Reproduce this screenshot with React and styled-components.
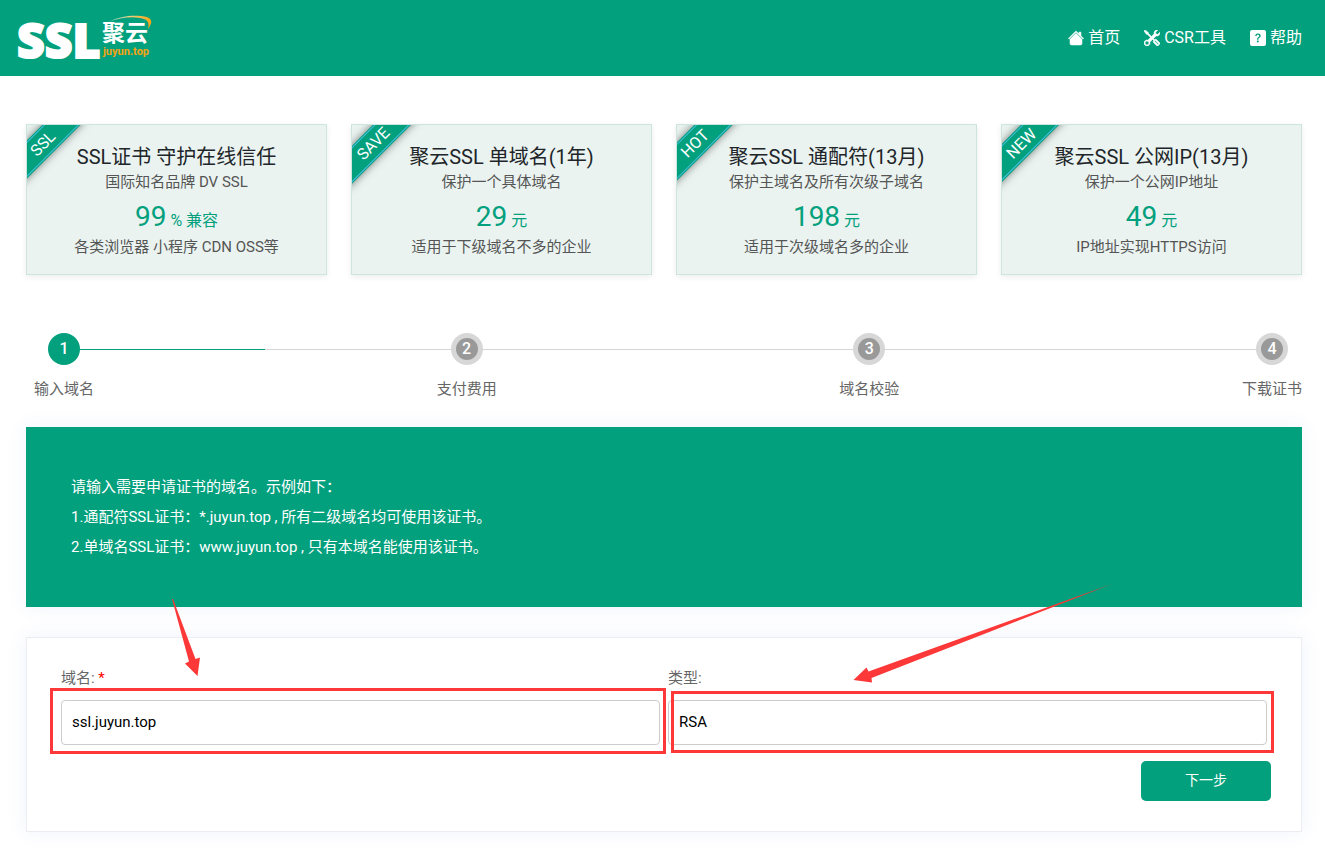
import React, { useState } from 'react';
import styled, { createGlobalStyle } from 'styled-components';
import { BsHouseFill, BsTools, BsQuestionSquareFill } from 'react-icons/bs';

const GREEN = '#03a07d';
const RED = '#fc3838';

const plans = [
  {
    ribbon: 'SSL',
    title: 'SSL证书 守护在线信任',
    subtitle: '国际知名品牌 DV SSL',
    price: '99',
    unit: '% 兼容',
    note: '各类浏览器 小程序 CDN OSS等',
  },
  {
    ribbon: 'SAVE',
    title: '聚云SSL 单域名(1年)',
    subtitle: '保护一个具体域名',
    price: '29',
    unit: '元',
    note: '适用于下级域名不多的企业',
  },
  {
    ribbon: 'HOT',
    title: '聚云SSL 通配符(13月)',
    subtitle: '保护主域名及所有次级子域名',
    price: '198',
    unit: '元',
    note: '适用于次级域名多的企业',
  },
  {
    ribbon: 'NEW',
    title: '聚云SSL 公网IP(13月)',
    subtitle: '保护一个公网IP地址',
    price: '49',
    unit: '元',
    note: 'IP地址实现HTTPS访问',
  },
];

const steps = ['输入域名', '支付费用', '域名校验', '下载证书'];

const Logo = () => (
  <LogoSvg width="140" height="52" viewBox="0 0 140 52" role="img" aria-label="SSL 聚云 juyun.top">
    <defs>
      <linearGradient id="swoosh" x1="0" x2="1">
        <stop offset="0" stopColor="#fff" stopOpacity="0.4" />
        <stop offset="0.5" stopColor="#f3d27c" />
        <stop offset="1" stopColor="#f5a312" />
      </linearGradient>
    </defs>
    <LogoName x="1" y="46">SSL</LogoName>
    <LogoBrand x="86" y="29">聚云</LogoBrand>
    <LogoDomain x="87" y="43">juyun.top</LogoDomain>
    <path
      d="M92 10 C104 4 116 3 125 4 C136 5 138 9 132 17 C134 10 131 7 124 6 C114 4 104 6 92 10 Z"
      fill="url(#swoosh)"
    />
  </LogoSvg>
);

const Header = () => (
  <HeaderContainer>
    <LogoLink href="/">
      <Logo />
    </LogoLink>
    <Nav>
      <NavLink href="/"><BsHouseFill stroke="currentColor" strokeWidth="0.5" />首页</NavLink>
      <NavLink href="/csr"><BsTools stroke="currentColor" strokeWidth="0.5" />CSR工具</NavLink>
      <NavLink href="/help"><BsQuestionSquareFill />帮助</NavLink>
    </Nav>
  </HeaderContainer>
);

const PlanCard = ({ plan }) => (
  <Card>
    <Ribbon>{plan.ribbon}</Ribbon>
    <CardTitle>{plan.title}</CardTitle>
    <CardSubtitle>{plan.subtitle}</CardSubtitle>
    <Price>
      {plan.price}<Unit> {plan.unit}</Unit>
    </Price>
    <CardNote>{plan.note}</CardNote>
  </Card>
);

const App = () => {
  const [domain, setDomain] = useState('ssl.juyun.top');
  const [type, setType] = useState('RSA');

  return (
    <>
      <GlobalStyle />
      <Header />
      <Main>
        <Plans>
          {plans.map(plan => <PlanCard key={plan.ribbon} plan={plan} />)}
        </Plans>

        <Steps>
          {steps.map((label, i) => (
            <Step key={label}>
              <StepNumber $active={i === 0}>{i + 1}</StepNumber>
              {label}
            </Step>
          ))}
        </Steps>

        <Banner>
          <p>请输入需要申请证书的域名。示例如下：</p>
          <p>1.通配符SSL证书：*.juyun.top , 所有二级域名均可使用该证书。</p>
          <p>2.单域名SSL证书：www.juyun.top , 只有本域名能使用该证书。</p>
        </Banner>

        <Form onSubmit={e => e.preventDefault()}>
          <Fields>
            <Field>
              <Label htmlFor="domain">域名: <Required>*</Required></Label>
              <Control>
                <Input
                  id="domain"
                  type="text"
                  value={domain}
                  onChange={e => setDomain(e.target.value)}
                />
                <Highlight $inset="-12px -6px -9px -11px" />
                <DomainArrow width="30" height="80" viewBox="0 0 30 80">
                  <path d="M1 0 L2 0 L24.5 60 L29 58.5 L26.5 77 L14 64.5 L18 62.5 Z" />
                </DomainArrow>
              </Control>
            </Field>
            <Field>
              <Label htmlFor="type">类型:</Label>
              <Control>
                <Select id="type" value={type} onChange={e => setType(e.target.value)}>
                  <option>RSA</option>
                  <option>ECC</option>
                </Select>
                <Highlight $inset="-9px -7px -8px 3px" />
                <TypeArrow width="260" height="100" viewBox="0 0 260 100">
                  <path d="M259 0 L15.5 87.5 L13.5 83.5 L0.5 96 L19 98.5 L18.5 94 Z" />
                </TypeArrow>
              </Control>
            </Field>
          </Fields>
          <Actions>
            <NextButton type="submit">下一步</NextButton>
          </Actions>
        </Form>
      </Main>
    </>
  );
};

const GlobalStyle = createGlobalStyle`
  * {
    box-sizing: border-box;
  }

  body {
    margin: 0;
    background: #fff;
    color: #666;
    font: 15px/20px Roboto, "Noto Sans CJK SC", sans-serif;
  }

  h2, p, ol {
    margin: 0;
    padding: 0;
  }
`;

const HeaderContainer = styled.header`
  display: flex;
  justify-content: space-between;
  align-items: center;
  height: 76px;
  padding: 0 23px 0 16px;
  background: ${GREEN};
`;

const LogoLink = styled.a`
  display: flex;
`;

const LogoSvg = styled.svg`
  overflow: visible;
`;

const LogoName = styled.text`
  fill: #fff;
  stroke: #fff;
  stroke-width: 2px;
  font: 800 48px "Open Sans", sans-serif;
`;

const LogoBrand = styled.text`
  fill: #fff;
  font: 700 23px "Noto Sans CJK SC", sans-serif;
`;

const LogoDomain = styled.text`
  fill: #f5a312;
  font: 700 11px Roboto, sans-serif;
`;

const Nav = styled.nav`
  display: flex;
  gap: 24px;
`;

const NavLink = styled.a`
  display: flex;
  align-items: center;
  gap: 4px;
  color: #fff;
  font-size: 16px;
  text-decoration: none;
`;

const Main = styled.main`
  padding: 48px 23px 24px 26px;
`;

const Plans = styled.section`
  display: grid;
  grid-template-columns: repeat(4, 1fr);
  gap: 24px;
`;

const Card = styled.article`
  position: relative;
  overflow: hidden;
  padding: 17px 16px;
  border: 1px solid #cde6dd;
  background: #eaf3f0;
  box-shadow: 0 2px 6px rgba(0, 0, 0, 0.08);
  text-align: center;
`;

const Ribbon = styled.span`
  position: absolute;
  top: 6px;
  left: -29px;
  padding: 0 30px;
  border: 1px solid #45bfe0;
  background: ${GREEN};
  box-shadow: 0 0 0 1px ${GREEN}, 0 0 10px rgba(0, 0, 0, 0.6);
  color: #fff;
  font-size: 16px;
  line-height: 23px;
  transform: rotate(-45deg);
`;

const CardTitle = styled.h2`
  color: #212529;
  font-size: 20px;
  font-weight: 400;
  line-height: 30px;
`;

const CardSubtitle = styled.p`
  color: #555;
`;

const Price = styled.p`
  padding-top: 5px;
  color: ${GREEN};
  font-size: 28px;
  line-height: 40px;
`;

const Unit = styled.span`
  font-size: 16px;
  line-height: 20px;
`;

const CardNote = styled.p`
  color: #555;
`;

const Steps = styled.ol`
  position: relative;
  display: flex;
  justify-content: space-between;
  margin: 58px 0 28px 8px;
  list-style: none;

  /* track runs between the centres of the first and last circles */
  &::before {
    content: '';
    position: absolute;
    top: 16px;
    left: 30px;
    right: 30px;
    height: 1px;
    background: linear-gradient(to right, ${GREEN} 16.66%, #d5d5d5 16.66%);
  }
`;

const Step = styled.li`
  position: relative;
  display: flex;
  flex-direction: column;
  align-items: center;
  gap: 14px;
  width: 60px;
  white-space: nowrap;
`;

const StepNumber = styled.span`
  display: flex;
  justify-content: center;
  align-items: center;
  width: 32px;
  height: 32px;
  border: 5px solid ${({ $active }) => ($active ? GREEN : '#d7d7d7')};
  border-radius: 50%;
  background: ${({ $active }) => ($active ? GREEN : '#999')};
  color: #fff;
  font-size: 16px;
  font-weight: 500;
`;

const Banner = styled.section`
  padding: 45px;
  background: ${GREEN};
  box-shadow: 0 0 20px rgba(60, 90, 220, 0.07);
  color: #fff;
  line-height: 30px;
`;

const Form = styled.form`
  margin-top: 30px;
  padding: 30px;
  border: 1px solid #ebedf2;
  background: #fff;
  box-shadow: 0 0 20px rgba(60, 90, 220, 0.07);
`;

const Fields = styled.div`
  display: grid;
  grid-template-columns: 1fr 1fr;
  gap: 8px;
  padding: 0 4px;
`;

const Field = styled.div`
  display: flex;
  flex-direction: column;
  gap: 12px;
`;

const Label = styled.label`
  color: #666;
`;

const Required = styled.span`
  color: #f00;
`;

const Control = styled.div`
  position: relative;
`;

const Input = styled.input`
  display: block;
  width: 100%;
  height: 45px;
  padding: 0 10px 2px;
  border: 1px solid #ccc;
  border-radius: 4px;
  background: #fff;
  color: #000;
  font: inherit;
`;

const Select = styled(Input).attrs({ as: 'select' })`
  appearance: none;
`;

const Highlight = styled.span`
  position: absolute;
  inset: ${({ $inset }) => $inset};
  border: 3px solid ${RED};
  pointer-events: none;
`;

const Arrow = styled.svg`
  position: absolute;
  fill: ${RED};
  pointer-events: none;
`;

const DomainArrow = styled(Arrow)`
  top: -101px;
  left: 110px;
`;

const TypeArrow = styled(Arrow)`
  top: -116px;
  left: 185px;
`;

const Actions = styled.div`
  display: flex;
  justify-content: flex-end;
  margin-top: 16px;
`;

const NextButton = styled.button`
  width: 130px;
  height: 40px;
  padding: 0 0 2px;
  border: 0;
  border-radius: 5px;
  background: ${GREEN};
  color: #fff;
  font: inherit;
  font-size: 14px;
  cursor: pointer;
`;

export default App;
